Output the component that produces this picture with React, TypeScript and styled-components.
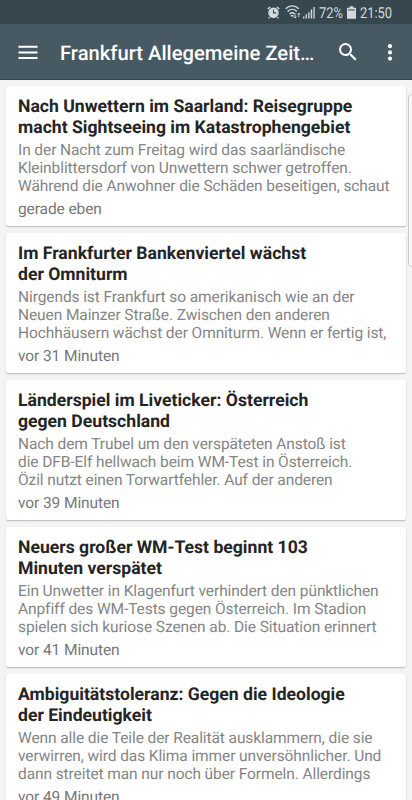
import React from "react";
import styled, { createGlobalStyle } from "styled-components";

const GlobalStyle = createGlobalStyle`
  * { box-sizing: border-box; }
  body { margin: 0; background: #f4f4f4; font-family: Roboto, "Noto Sans", sans-serif; text-rendering: geometricPrecision; }
`;

const Screen = styled.div`
  position: relative;
  display: flex;
  flex-direction: column;
  width: 412px;
  height: 800px;
  overflow: hidden;
  background: #f4f4f4;
`;

const StatusBar = styled.div`
  display: flex;
  flex: 0 0 24px;
  align-items: center;
  justify-content: flex-end;
  padding-right: 19px;
  background: #37474f;
  color: #d3d9dc;
  font-size: 15px;
  line-height: 20px;
`;

const StatusText = styled.span<{ $width: number }>`
  width: ${(p) => p.$width}px;
  margin-top: 2px;
  white-space: nowrap;
  transform: scaleX(0.86);
  transform-origin: left center;
`;

const StatusIcon = styled.svg<{ $gap: number }>`
  flex: none;
  margin-right: ${(p) => p.$gap}px;
`;

const Toolbar = styled.header`
  display: flex;
  flex: 0 0 56px;
  align-items: center;
  padding: 0 10px 0 16px;
  background: #475a64;
  border-bottom: 1px solid #34464f;
  color: #fff;
`;

const IconButton = styled.button`
  display: flex;
  flex: none;
  padding: 0;
  border: 0;
  background: none;
  color: #fff;
`;

const Title = styled.h1`
  flex: 1;
  margin: 2px 0 0 20px;
  font-size: 20.2px;
  font-weight: 500;
  line-height: 28px;
  white-space: nowrap;
`;

const Actions = styled.div`
  display: flex;
  gap: 18px;
`;

const Feed = styled.main`
  display: flex;
  flex-direction: column;
  gap: 7px;
  padding: 6px 6px 0;
`;

const Card = styled.article`
  flex: 0 0 140px;
  padding: 11px 12px 0;
  border-radius: 2px;
  background: #fff;
  box-shadow: 0 1px 1.5px rgba(0, 0, 0, 0.25);
  white-space: pre;
`;

const Headline = styled.h2`
  margin: 0;
  color: #242424;
  font-size: 17.6px;
  font-weight: 700;
  line-height: 21px;
`;

const Summary = styled.p`
  margin: 1.5px 0 0;
  color: #858585;
  font-size: 15.5px;
  letter-spacing: -0.09px;
  line-height: 18.4px;
`;

const Time = styled.time`
  display: block;
  margin-top: 4.5px;
  color: #777;
  font-size: 15.5px;
  letter-spacing: -0.09px;
  line-height: 19px;
`;

const ScrollThumb = styled.div`
  position: absolute;
  top: 94px;
  left: 408px;
  width: 10px;
  height: 173px;
  border: 1px solid #c9c9c9;
  border-radius: 4px;
  background: #fafafa;
`;

const articles = [
  {
    title: "Nach Unwettern im Saarland: Reisegruppe\nmacht Sightseeing im Katastrophengebiet",
    text: "In der Nacht zum Freitag wird das saarländische\nKleinblittersdorf von Unwettern schwer getroffen.\nWährend die Anwohner die Schäden beseitigen, schaut",
    time: "gerade eben",
  },
  {
    title: "Im Frankfurter Bankenviertel wächst\nder Omniturm",
    text: "Nirgends ist Frankfurt so amerikanisch wie an der\nNeuen Mainzer Straße. Zwischen den anderen\nHochhäusern wächst der Omniturm. Wenn er fertig ist,",
    time: "vor 31 Minuten",
  },
  {
    title: "Länderspiel im Liveticker: Österreich\ngegen Deutschland",
    text: "Nach dem Trubel um den verspäteten Anstoß ist\ndie DFB-Elf hellwach beim WM-Test in Österreich.\nÖzil nutzt einen Torwartfehler. Auf der anderen",
    time: "vor 39 Minuten",
  },
  {
    title: "Neuers großer WM-Test beginnt 103\nMinuten verspätet",
    text: "Ein Unwetter in Klagenfurt verhindert den pünktlichen\nAnpfiff des WM-Tests gegen Österreich. Im Stadion\nspielen sich kuriose Szenen ab. Die Situation erinnert",
    time: "vor 41 Minuten",
  },
  {
    title: "Ambiguitätstoleranz: Gegen die Ideologie\nder Eindeutigkeit",
    text: "Wenn alle die Teile der Realität ausklammern, die sie\nverwirren, wird das Klima immer unversöhnlicher. Und\ndann streitet man nur noch über Formeln. Allerdings",
    time: "vor 49 Minuten",
  },
];

const AlarmIcon = () => (
  <StatusIcon $gap={5} width="13" height="13" viewBox="0 0 13 13">
    <circle cx="6.5" cy="6.7" r="5.2" fill="#d3d9dc" />
    <path d="M.7 3.1 3.2.9M12.3 3.1 9.8.9M2.5 11.2 1.5 12.4M10.5 11.2l1 1.2" stroke="#d3d9dc" strokeWidth="1.3" />
    <path d="M6.5 3.7v3.2h2.8" fill="none" stroke="#37474f" strokeWidth="1.1" />
  </StatusIcon>
);

const WifiIcon = () => (
  <StatusIcon $gap={2} width="16" height="14" viewBox="0 0 16 14" fill="none" stroke="#d3d9dc">
    <path d="M.7 3.8c3.8-3.9 9.2-3.9 13 0M2.6 6.4c2.7-2.7 6.5-2.7 9.2 0M4.6 8.9c1.6-1.6 3.6-1.6 5.2 0" strokeWidth="1.4" />
    <path d="m5.3 10 1.9 2.3L8.6 10z" fill="#d3d9dc" stroke="none" />
    <path d="M10 8.8v4.2M8.6 11.5l1.4 1.5 1.4-1.5M13.8 12V8M12.4 9.5 13.8 8l1.4 1.5" strokeWidth=".9" />
  </StatusIcon>
);

const SignalIcon = () => (
  <StatusIcon $gap={4} width="12" height="13" viewBox="0 0 12 13" fill="#d3d9dc">
    <path d="M0 10.5h1.4v2H0zM2.6 8.3H4v4.2H2.6zM5.2 6.2h1.4v6.3H5.2zM7.8 3.6h1.4v8.9H7.8zM10.4 1h1.3v11.5h-1.3z" />
  </StatusIcon>
);

const BatteryIcon = () => (
  <StatusIcon $gap={4} width="9" height="13" viewBox="0 0 9 13">
    <path d="M2.6.2h3.8v1.6H9v10.9H0V1.8h2.6z" fill="#d3d9dc" />
    <path d="M1.2 3h6.6v1.7H1.2z" fill="#74828a" />
  </StatusIcon>
);

export default function App() {
  return (
    <Screen>
      <GlobalStyle />
      <StatusBar>
        <AlarmIcon />
        <WifiIcon />
        <SignalIcon />
        <StatusText $width={28}>72%</StatusText>
        <BatteryIcon />
        <StatusText $width={33}>21:50</StatusText>
      </StatusBar>
      <Toolbar>
        <IconButton aria-label="Menü">
          <svg width="24" height="24" viewBox="0 0 24 24" fill="currentColor">
            <path d="M2.5 5.8h19v2h-19zM2.5 11.4h19v2h-19zM2.5 17h19v2h-19z" />
          </svg>
        </IconButton>
        <Title>Frankfurt Allegemeine Zeit…</Title>
        <Actions>
          <IconButton aria-label="Suchen">
            <svg width="24" height="24" viewBox="0 0 24 24" fill="currentColor">
              <path d="M15.5 14h-.79l-.28-.27A6.47 6.47 0 0 0 16 9.5 6.5 6.5 0 1 0 9.5 16c1.61 0 3.09-.59 4.23-1.57l.27.28v.79l5 4.99L20.49 19zm-6 0a4.5 4.5 0 1 1 0-9 4.5 4.5 0 0 1 0 9z" />
            </svg>
          </IconButton>
          <IconButton aria-label="Mehr">
            <svg width="24" height="24" viewBox="0 0 24 24" fill="currentColor">
              <circle cx="12" cy="6.2" r="2.1" />
              <circle cx="12" cy="12.4" r="2.1" />
              <circle cx="12" cy="18.6" r="2.1" />
            </svg>
          </IconButton>
        </Actions>
      </Toolbar>
      <Feed>
        {articles.map((a) => (
          <Card key={a.title}>
            <Headline>{a.title}</Headline>
            <Summary>{a.text}</Summary>
            <Time>{a.time}</Time>
          </Card>
        ))}
      </Feed>
      <ScrollThumb />
    </Screen>
  );
}
